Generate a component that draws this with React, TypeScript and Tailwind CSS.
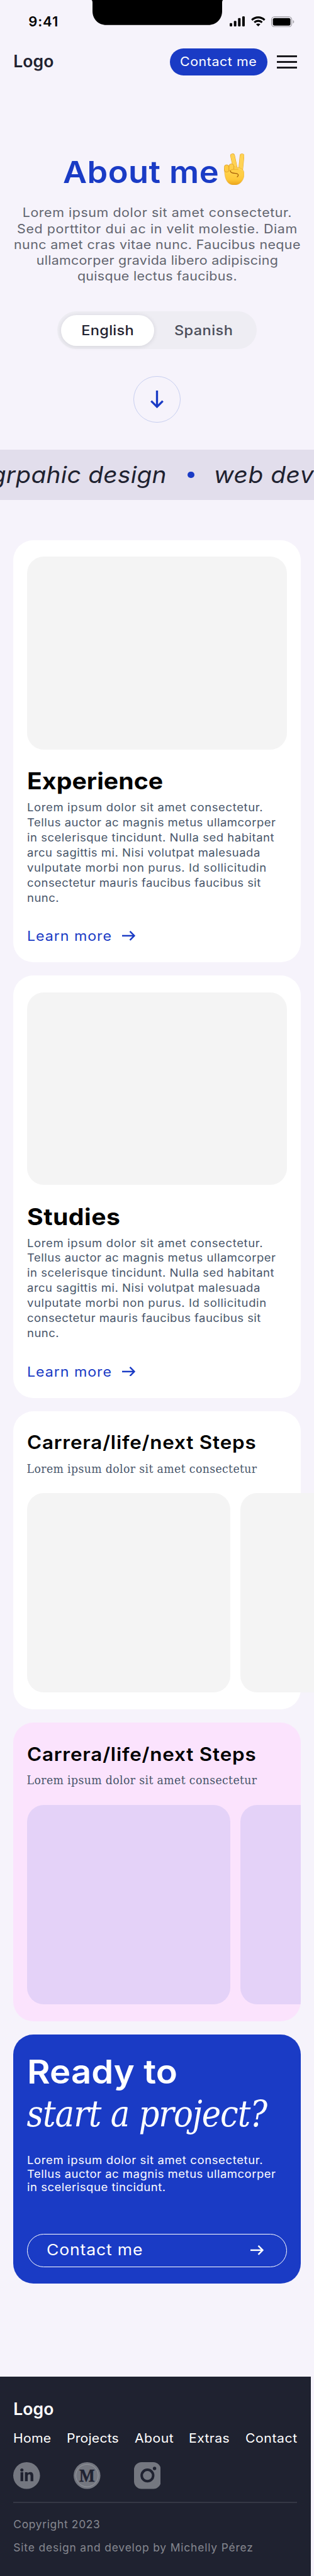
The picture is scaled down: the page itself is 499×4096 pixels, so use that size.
import React from "react";

function Notch() {
  return (
    <svg className="block h-[40px] w-[210px] shrink-0" viewBox="0 0 210 40" fill="#000">
      <path d="M0.6 0 C1.7 1 2 2.5 2 4 V17.5 C2 30.5 11.5 39.8 24 39.8 H186 C198.500 39.8 208 30.5 208 17.5 V4 C208 2.5 208.300 1 209.400 0 Z" />
    </svg>
  );
}

function SignalIcon() {
  return (
    <svg className="h-[16px] w-[24.3px]" viewBox="0 0 36.5 24" fill="#000">
      <rect x="0" y="16" width="6" height="8" rx="1.8" />
      <rect x="10" y="11" width="6" height="13" rx="1.8" />
      <rect x="20" y="4" width="6" height="20" rx="1.8" />
      <rect x="30" y="0" width="6" height="24" rx="1.8" />
    </svg>
  );
}

function WifiIcon() {
  return (
    <svg className="h-[16px] w-[22.7px]" viewBox="0 0 34 24" fill="none" stroke="#000">
      <path d="M1.8 8.7 C10.5 0.4 23.5 0.4 32.2 8.7" strokeWidth="4.8" />
      <path d="M7.8 14.4 C13 9.5 21 9.5 26.2 14.4" strokeWidth="4.6" />
      <path d="M17 24 L11.8 18.9 C14.8 16.5 19.2 16.5 22.2 18.9 Z" fill="#000" stroke="none" />
    </svg>
  );
}

function BatteryIcon() {
  return (
    <svg className="h-[17.3px] w-[36.6px]" viewBox="0 0 55 26">
      <rect x="1" y="1" width="48" height="24" rx="7" fill="none" stroke="#a3a1a7" strokeWidth="2" />
      <rect x="4" y="4" width="42" height="18" rx="4" fill="#000" />
      <path d="M52 9 C55.5 10.5 55.5 15.5 52 17 Z" fill="#a3a1a7" />
    </svg>
  );
}

function PeaceHand() {
  return (
    <svg className="h-[50.6px] w-[32.6px]" viewBox="0 0 49 76">
      <defs>
        <linearGradient id="skin" x1="0" y1="0" x2="0" y2="1">
          <stop offset="0" stopColor="#ffd95c" />
          <stop offset="0.7" stopColor="#fec838" />
          <stop offset="1" stopColor="#eba41a" />
        </linearGradient>
      </defs>
      <g strokeLinecap="round" fill="none">
        <path d="M20.5 5.7 L27.5 38" stroke="#e2a026" strokeWidth="11" />
        <path d="M20.5 5.7 L27.5 38" stroke="#ffd355" strokeWidth="9.4" />
        <path d="M43 5.7 L39.5 42" stroke="#e2a026" strokeWidth="11" />
        <path d="M43 5.7 L39.5 42" stroke="#ffd355" strokeWidth="9.4" />
      </g>
      <path
        d="M1 36 C1 62 8 75.5 25 75.5 C40 75.5 48 62 48 49 C48 41 44 36 36 34 L10 30 Z"
        fill="url(#skin)"
        stroke="#e0991c"
        strokeWidth="0.7"
      />
      <rect x="0.6" y="27" width="11.5" height="17.5" rx="5.5" fill="#ffcb42" stroke="#d18d16" strokeWidth="0.9" />
      <rect x="12" y="24.8" width="11.5" height="19" rx="5.5" fill="#ffcf4b" stroke="#d18d16" strokeWidth="0.9" />
      <path
        d="M15.5 41 C16 38 22 37.5 30 37.5 C40 37.5 47 42 47 50 L34 56 C37 51 33 47.8 27 47.5 C20 47.2 15 46 15.5 41 Z"
        fill="#ffce46"
      />
      <path
        d="M15.5 41 C15 46 20 47.2 27 47.5 C33 47.8 37 51 31.5 56"
        fill="none"
        stroke="#a86108"
        strokeWidth="1.7"
        strokeLinecap="round"
      />
      <path d="M15.5 40.5 C18 37.5 24 37.3 34 37.6" fill="none" stroke="#d9941c" strokeWidth="0.9" />
    </svg>
  );
}

function ArrowRight() {
  return (
    <svg className="h-[15.8px] w-[21.6px]" viewBox="0 0 32.5 23.7" fill="none" stroke="currentColor" strokeWidth="3.7">
      <path d="M0 11.85 H29" />
      <path d="M18.8 1.4 L29.3 11.85 L18.8 22.3" />
    </svg>
  );
}

function ArrowDown() {
  return (
    <svg className="h-[28.3px] w-[21px]" viewBox="0 0 31.6 42.5" fill="none" stroke="#1a3bc5" strokeWidth="5">
      <path d="M15.8 0 V38" />
      <path d="M1.9 25 L15.8 38.8 L29.7 25" />
    </svg>
  );
}

function LinkedInIcon() {
  return (
    <svg className="size-[42.6px]" viewBox="0 0 64 64">
      <circle cx="32" cy="32" r="32" fill="#747780" />
      <g fill="#1f2230">
        <circle cx="20.7" cy="18.8" r="3.8" />
        <rect x="17.4" y="24" width="6.6" height="21.4" />
        <path d="M28 24 h6.3 v2.9 c1.3 -2.2 3.5 -3.4 6.3 -3.4 c6 0 7.4 4 7.4 9.2 v12.7 h-6.6 v-11.5 c0 -2.7 -0.5 -4.9 -3.2 -4.9 c-2.8 0 -3.6 2.2 -3.6 4.9 v11.5 h-6.6 z" />
      </g>
    </svg>
  );
}

function MediumIcon() {
  return (
    <svg className="size-[42.6px]" viewBox="0 0 64 64">
      <circle cx="32" cy="32" r="32" fill="#747780" />
      <circle cx="32" cy="32" r="26.7" fill="none" stroke="#a5a7ad" strokeWidth="1" />
      <text
        x="13.5"
        y="46"
        textLength="37"
        lengthAdjust="spacingAndGlyphs"
        className="fill-[#1f2230] stroke-[#1f2230] font-['Liberation_Serif',serif] text-[44px] font-bold [stroke-width:0.8]"
      >
        M
      </text>
    </svg>
  );
}

function InstagramIcon() {
  return (
    <svg className="size-[42.6px]" viewBox="0 0 64 64">
      <rect width="64" height="64" rx="18" fill="#747780" />
      <circle cx="32" cy="31.8" r="13.7" fill="none" stroke="#1f2230" strokeWidth="6" />
      <circle cx="49" cy="15" r="4.1" fill="#1f2230" />
    </svg>
  );
}

function StoryCard({ title, titleClass }: { title: string; titleClass: string }) {
  return (
    <article className="h-[671.4px] rounded-[32px] bg-white px-[21.3px] pt-[26.6px]">
      <div className="h-[306.4px] rounded-[26.6px] bg-[#f4f4f4]" />
      <h2
        className={`mt-[28.6px] w-fit origin-left scale-x-[1.06] text-[37px] leading-[44px] font-bold text-black ${titleClass}`}
      >
        {title}
      </h2>
      <p className="mt-[7.8px] w-fit origin-left scale-x-[1.07] text-[17.3px] leading-[23.95px] whitespace-nowrap text-[#475569]">
        <span className="block tracking-[0.58px]">Lorem ipsum dolor sit amet consectetur.</span>
        <span className="block tracking-[0.47px]">Tellus auctor ac magnis metus ullamcorper</span>
        <span className="block tracking-[0.49px]">in scelerisque tincidunt. Nulla sed habitant</span>
        <span className="block tracking-[0.47px]">arcu sagittis mi. Nisi volutpat malesuada</span>
        <span className="block tracking-[0.57px]">vulputate morbi non purus. Id sollicitudin</span>
        <span className="block tracking-[0.41px]">consectetur mauris faucibus faucibus sit</span>
        <span className="block tracking-[0.47px]">nunc.</span>
      </p>
      <a className="mt-[35.3px] flex items-center text-[#1a3bc5]">
        <span className="w-[151.2px] text-[21.3px] leading-[26px] whitespace-nowrap">
          <span className="inline-block origin-left scale-x-[1.09] tracking-[0.87px]">Learn more</span>
        </span>
        <ArrowRight />
      </a>
    </article>
  );
}

function StepsCard({ cardClass, tileClass }: { cardClass: string; tileClass: string }) {
  return (
    <article className={`h-[474.3px] rounded-[32px] pt-[32.7px] pl-[21.3px] ${cardClass}`}>
      <h2 className="w-fit origin-left scale-x-[1.07] text-[29.3px] leading-[36px] font-semibold tracking-[0.78px] whitespace-nowrap text-black">
        Carrera/life/next Steps
      </h2>
      <p className="mt-[11.5px] font-['DejaVu_Serif_Condensed','DejaVu_Serif',serif] text-[19.2px] leading-[24px] tracking-[0.39px] whitespace-nowrap text-[#475569]">
        Lorem ipsum dolor sit amet consectetur
      </p>
      <div className="mt-[26.4px] flex gap-[15.9px]">
        <div className={`h-[316.9px] w-[323.3px] shrink-0 rounded-[26.6px] ${tileClass}`} />
        <div className={`h-[316.9px] w-[323.3px] shrink-0 rounded-[26.6px] ${tileClass}`} />
      </div>
    </article>
  );
}

export default function App() {
  return (
    <div className="h-[4096px] w-[499px] overflow-hidden bg-[#f6f3fb] font-['Inter','Liberation_Sans',sans-serif] text-[#1f2230]">
      <div className="flex h-[77.3px] items-start">
        <div className="w-[145.4px] shrink-0 pt-[22.3px] pl-[45.2px] text-[22px] leading-[24px] font-semibold tracking-[0.9px] text-black">
          9:41
        </div>
        <Notch />
        <div className="flex items-center pt-[25.7px] pl-[9.3px]">
          <SignalIcon />
          <div className="ml-[10.3px]">
            <WifiIcon />
          </div>
          <div className="ml-[9.3px]">
            <BatteryIcon />
          </div>
        </div>
      </div>

      <header className="flex h-[42.5px] items-center pr-[26.8px] pl-[21.3px]">
        <div className="-mt-[3.6px] text-[26.6px] leading-[32px] font-semibold">Logo</div>
        <a className="ml-auto flex h-[42.5px] w-[154.3px] items-center rounded-full bg-[#1a3bc5] pb-px pl-[15.8px] text-[20px] whitespace-nowrap text-white">
          <span className="origin-left scale-x-[1.07] tracking-[0.53px]">Contact me</span>
        </a>
        <div className="ml-[15.9px] flex w-[31.8px] flex-col gap-[5.6px]">
          <span className="h-[3.3px] bg-[#1c1b1f]" />
          <span className="h-[3.3px] bg-[#1c1b1f]" />
          <span className="h-[3.3px] bg-[#1c1b1f]" />
        </div>
      </header>

      <section className="flex h-[595.3px] flex-col items-center pt-[126.2px]">
        <div className="flex h-[56px] w-full pl-[99.5px]">
          <h1 className="w-[256px] text-[48.5px] leading-[56px] font-semibold whitespace-nowrap text-[#1a3bc5]">
            <span className="inline-block origin-left scale-x-[1.08] tracking-[0.41px]">About me</span>
          </h1>
          <div className="-mt-[2.3px]">
            <PeaceHand />
          </div>
        </div>
        <p className="mt-[24.4px] scale-x-[1.07] text-center text-[20px] leading-[25.26px] whitespace-nowrap text-[#62656f]">
          <span className="block tracking-[0.53px]">Lorem ipsum dolor sit amet consectetur.</span>
          <span className="block tracking-[0.56px]">Sed porttitor dui ac in velit molestie. Diam</span>
          <span className="block tracking-[0.36px]">nunc amet cras vitae nunc. Faucibus neque</span>
          <span className="block tracking-[0.27px]">ullamcorper gravida libero adipiscing</span>
          <span className="block tracking-[0.3px]">quisque lectus faucibus.</span>
        </p>
        <div className="mt-[42.6px] flex h-[59.8px] w-[316.6px] shrink-0 items-center rounded-full bg-[#eeedf3] pl-[5.3px] text-[22px] font-medium">
          <div className="flex h-[49.4px] w-[148.9px] items-center justify-center rounded-full bg-white pl-px shadow-[0_1px_7px_rgba(31,34,48,0.13)]">
            <span className="scale-x-[1.07] tracking-[0.29px]">English</span>
          </div>
          <div className="flex flex-1 items-center pl-[31.5px] text-[#4b4e5a]">
            <span className="origin-left scale-x-[1.07] tracking-[0.39px]">Spanish</span>
          </div>
        </div>
        <div className="mt-[42.8px] flex size-[74.2px] shrink-0 items-center justify-center rounded-full border-[1.3px] border-[#c8cff0]">
          <ArrowDown />
        </div>
      </section>

      <div className="flex h-[79.8px] items-center overflow-hidden bg-[#e2deec] text-[37px] leading-[48px] whitespace-nowrap italic">
        <div className="flex w-[265px] shrink-0 justify-end">
          <span className="origin-right scale-x-[1.05] tracking-[0.27px]">grpahic design</span>
        </div>
        <span className="ml-[33.2px] size-[10.6px] shrink-0 rounded-full bg-[#1a3bc5]" />
        <div className="ml-[31px] origin-left scale-x-[1.05] tracking-[0.5px]">web development</div>
      </div>

      <main className="flex flex-col gap-[21.2px] px-[21.3px] pt-[63.7px]">
        <StoryCard title="Experience" titleClass="tracking-[0.04px]" />
        <StoryCard title="Studies" titleClass="tracking-[0.44px]" />
        <StepsCard cardClass="bg-white" tileClass="bg-[#f4f4f4]" />
        <StepsCard cardClass="overflow-hidden bg-[#fbe3fd]" tileClass="bg-[#e4d2f8]" />

        <article className="h-[396.4px] rounded-[32px] bg-[#1a3bc5] px-[21.3px] pt-[28.7px] text-white">
          <h2 className="whitespace-nowrap">
            <span className="block w-fit origin-left scale-x-[1.07] text-[52.5px] leading-[62px] font-semibold tracking-[0.09px]">
              Ready to
            </span>
            <span className="mt-[2.6px] block font-['DejaVu_Serif_Condensed','DejaVu_Serif',serif] text-[57px] leading-[66px] font-normal tracking-[-0.97px] italic">
              start a project?
            </span>
          </h2>
          <p className="mt-[30.2px] w-fit origin-left scale-x-[1.07] text-[17.3px] leading-[21.4px] whitespace-nowrap">
            <span className="block tracking-[0.58px]">Lorem ipsum dolor sit amet consectetur.</span>
            <span className="block tracking-[0.47px]">Tellus auctor ac magnis metus ullamcorper</span>
            <span className="block tracking-[0.48px]">in scelerisque tincidunt.</span>
          </p>
          <a className="mt-[63.2px] flex h-[53.3px] items-center justify-between rounded-full border-[1.4px] border-white pr-[36.3px] pl-[30.5px]">
            <span className="origin-left scale-x-[1.09] pb-[2px] text-[24.4px] tracking-[0.76px]">Contact me</span>
            <ArrowRight />
          </a>
        </article>
      </main>

      <footer className="mt-[148.3px] h-[316.9px] w-[493.5px] bg-[#1f2230] px-[21.3px] pt-[34.3px] text-white">
        <div className="text-[26.6px] leading-[32px] font-semibold">Logo</div>
        <nav className="mt-[18.4px] grid grid-cols-[84.8px_108.3px_85.4px_89.9px_auto] justify-items-start text-[20px] leading-[26px] whitespace-nowrap">
          <a className="origin-left scale-x-[1.06] tracking-[0.21px]">Home</a>
          <a className="origin-left scale-x-[1.06] tracking-[0.19px]">Projects</a>
          <a className="origin-left scale-x-[1.06] tracking-[0.47px]">About</a>
          <a className="origin-left scale-x-[1.06] tracking-[0.38px]">Extras</a>
          <a className="origin-left scale-x-[1.06] tracking-[0.54px]">Contact</a>
        </nav>
        <div className="mt-[25px] flex gap-[53.2px]">
          <LinkedInIcon />
          <MediumIcon />
          <InstagramIcon />
        </div>
        <div className="mt-[20.7px] h-[1.4px] bg-[#353845]" />
        <p className="mt-[23.2px] text-[17.4px] leading-[22px] tracking-[0.68px] text-[#85878f]">Copyright 2023</p>
        <p className="mt-[15.4px] text-[17.4px] leading-[22px] tracking-[0.84px] whitespace-nowrap text-[#85878f]">
          Site design and develop by Michelly Pérez
        </p>
      </footer>
    </div>
  );
}
